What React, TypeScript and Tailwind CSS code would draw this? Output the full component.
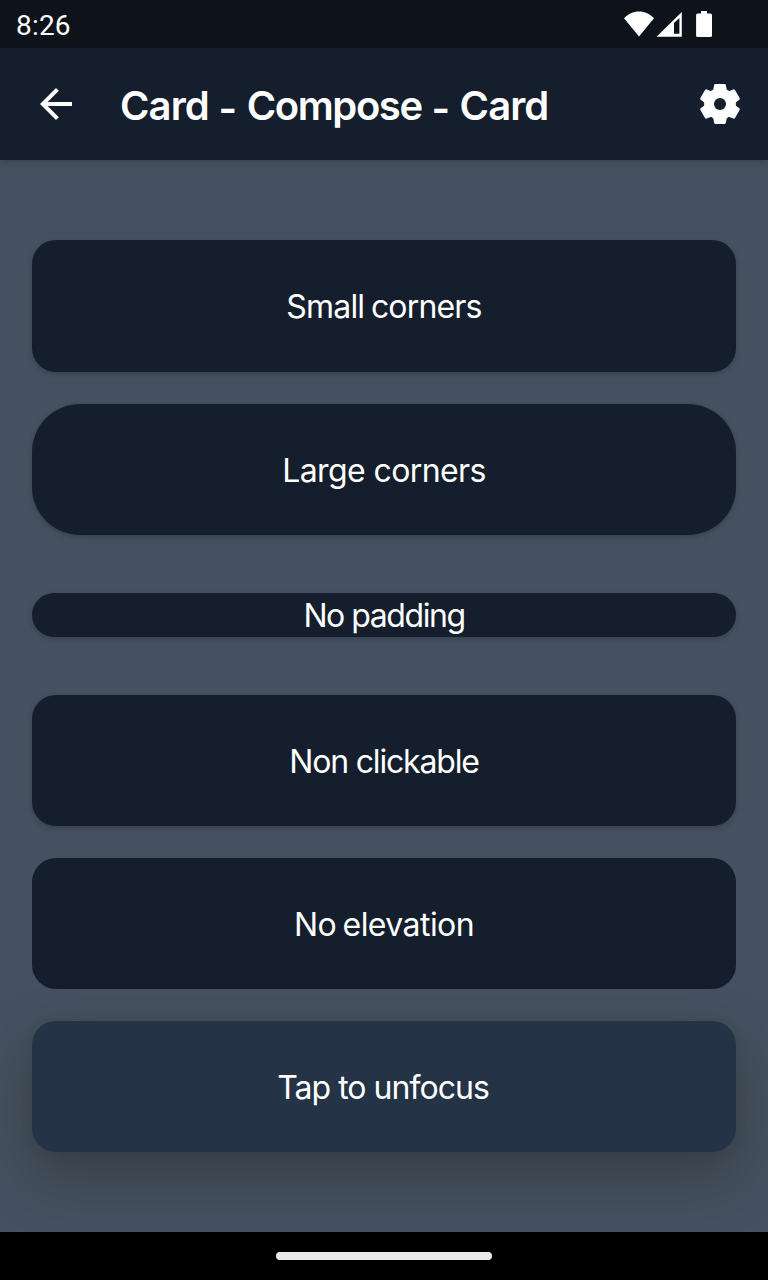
type CardItem = { label: string; text: string; box: string };

const cards: CardItem[] = [
  {
    label: "Small corners",
    text: "tracking-[-0.83px] [word-spacing:-1.5px]",
    box: "h-[132px] rounded-3xl bg-[#151e2c] shadow-[0_2px_5px_rgba(30,34,34,0.32)]",
  },
  {
    label: "Large corners",
    text: "tracking-[-0.6px]",
    box: "mt-8 h-[131px] rounded-[48px] bg-[#151e2c] shadow-[0_2px_5px_rgba(30,34,34,0.32)]",
  },
  {
    label: "No padding",
    text: "tracking-[-1.44px]",
    box: "mt-[58px] h-11 rounded-3xl bg-[#151e2c] shadow-[0_2px_5px_rgba(30,34,34,0.32)]",
  },
  {
    label: "Non clickable",
    text: "tracking-[-1.17px]",
    box: "mt-[58px] h-[131px] rounded-3xl bg-[#151e2c] shadow-[0_2px_5px_rgba(30,34,34,0.32)]",
  },
  {
    label: "No elevation",
    text: "tracking-[-0.56px] [word-spacing:-2px]",
    box: "mt-8 h-[131px] rounded-3xl bg-[#151e2c]",
  },
  {
    label: "Tap to unfocus",
    text: "tracking-[-0.97px] pr-[2px]",
    box: "mt-8 h-[131px] rounded-3xl bg-[#253346] shadow-[0_24px_56px_rgba(34,38,34,0.42),0_2px_12px_rgba(40,44,40,0.12)]",
  },
];

function StatusBar() {
  return (
    <div className="flex h-12 shrink-0 items-center justify-between bg-[#0e131b] pl-4 pr-12">
      <span className="pt-[3px] font-['Roboto',sans-serif] text-[28px] leading-8 tracking-[0.2px]">8:26</span>
      <svg width="96" height="48" viewBox="0 0 96 48" fill="white" aria-hidden="true">
        <path d="M15 36.4 0 18.2C4 14 9.2 11.5 15 11.5S26 14 30 18.2Z" />
        <path fillRule="evenodd" d="M57.8 12V36.8H32.5ZM55.4 18 50 23V33.8H55.4Z" />
        <path d="M77 11h6v2.4h3.4q1.6 0 1.6 1.6v20.4q0 1.6-1.6 1.6H73.7q-1.6 0-1.6-1.6V15q0-1.6 1.6-1.6H77Z" />
      </svg>
    </div>
  );
}

function BackIcon() {
  return (
    <svg width="48" height="48" viewBox="0 0 24 24" fill="white" aria-hidden="true">
      <path d="M20 11H7.83l5.59-5.59L12 4l-8 8 8 8 1.41-1.41L7.83 13H20v-2z" />
    </svg>
  );
}

function GearIcon() {
  const tooth =
    "M-9 -12.8 Q-6.7 -13.6 -6.4 -15.4 L-6 -18.6 Q-5.8 -20 -4.4 -20 H4.4 Q5.8 -20 6 -18.6 L6.4 -15.4 Q6.7 -13.6 9 -12.8Z";
  return (
    <svg width="48" height="48" viewBox="-24 -24 48 48" fill="white" aria-hidden="true">
      <circle r="15.2" />
      {[0, 60, 120, 180, 240, 300].map((angle) => (
        <path key={angle} d={tooth} transform={`rotate(${angle})`} />
      ))}
      <circle r="6" fill="#151e2c" />
    </svg>
  );
}

function Dash() {
  return <span className="align-[-3px] leading-none tracking-[-0.3px]"> - </span>;
}

export default function App() {
  return (
    <div className="flex h-[1280px] w-[768px] flex-col overflow-hidden bg-[#455160] font-['Inter',sans-serif] text-white">
      <StatusBar />
      <header className="z-10 flex h-28 shrink-0 items-center bg-[#151e2c] pl-8 pr-6 shadow-[0_2px_6px_rgba(30,34,34,0.3)]">
        <BackIcon />
        <h1 className="ml-10 flex-1 whitespace-pre pt-[3px] text-[40px] font-semibold leading-[48px] tracking-[-0.9px]">
          Card
          <Dash />
          <span className="tracking-[-1.4px]">Compose</span>
          <Dash />
          Card
        </h1>
        <GearIcon />
      </header>
      <main className="flex flex-1 flex-col overflow-hidden px-8 pt-20">
        {cards.map((card) => (
          <div key={card.label} className={`flex shrink-0 items-center justify-center ${card.box}`}>
            <span className={`pt-0.5 text-[32px] leading-[42px] ${card.text}`}>{card.label}</span>
          </div>
        ))}
      </main>
      <footer className="flex h-12 shrink-0 items-center justify-center bg-black">
        <div className="h-2 w-[216px] rounded-full bg-[#ebebeb]" />
      </footer>
    </div>
  );
}
